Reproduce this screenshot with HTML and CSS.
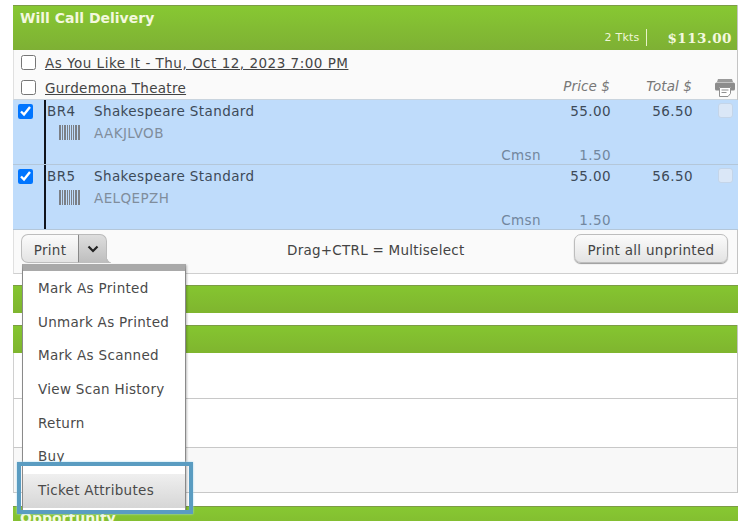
FILE: index.html
```html
<!DOCTYPE html>
<html lang="en">
<head>
<meta charset="utf-8">
<title>Will Call Delivery</title>
<link rel="stylesheet" href="styles.css">
</head>
<body>
<main class="page">
  <section class="panel">
    <header class="bar bar-main">
      <h2 class="bar-title">Will Call Delivery</h2>
      <div class="bar-summary">
        <span class="tkts">2 Tkts</span>
        <span class="amount">$113.00</span>
      </div>
    </header>
    <div class="order-head">
      <label class="head-line head-line-top"><input type="checkbox" class="check"><a href="#">As You Like It - Thu, Oct 12, 2023 7:00 PM</a></label>
      <div class="head-line head-line-cols">
        <label class="venue"><input type="checkbox" class="check"><a href="#">Gurdemona Theatre</a></label>
        <span class="col-price">Price $</span>
        <span class="col-total">Total $</span>
        <svg class="printer" viewBox="0 0 20 18" aria-hidden="true">
          <path fill="#9a9a9a" d="M3 0h14l1 3H2z"/>
          <path fill="#8c8c8c" d="M1.500 3.500h17a1.500 1.500 0 0 1 1.500 1.500v5a1.500 1.500 0 0 1-1.500 1.500H16V8H4v3.500H1.500A1.500 1.500 0 0 1 0 10V5a1.500 1.500 0 0 1 1.500-1.500z"/>
          <path fill="#fff" stroke="#909090" d="M4.500 8.500h11v6l-2.500 3h-8.500z"/>
          <path stroke="#909090" d="M6.500 11h7M6.500 13.500h5"/>
        </svg>
      </div>
    </div>

    <div class="ticket">
      <div class="tick-cell"><input type="checkbox" class="check" checked></div>
      <div class="tick-body">
        <div class="t-line">
          <span class="seat">BR4</span><span class="name">Shakespeare Standard</span>
          <span class="num price">55.00</span><span class="num total">56.50</span>
          <input type="checkbox" class="faint">
        </div>
        <div class="t-line t-code">
          <span class="seat"><svg class="barcode" viewBox="0 0 21 15" aria-hidden="true"><path fill="#7b7f85" d="M0 0h2v15H0zM3 0h1v15H3zM5 0h2v15H5zM8 0h1v15H8zM10 0h1v15h-1zM12 0h1v15h-1zM14 0h1v15h-1zM16 0h2v15h-2zM19 0h2v15h-2z"/></svg></span><span class="code">AAKJLVOB</span>
        </div>
        <div class="t-line t-fee"><span class="cmsn">Cmsn</span><span class="num price">1.50</span></div>
      </div>
    </div>

    <div class="ticket">
      <div class="tick-cell"><input type="checkbox" class="check" checked></div>
      <div class="tick-body">
        <div class="t-line">
          <span class="seat">BR5</span><span class="name">Shakespeare Standard</span>
          <span class="num price">55.00</span><span class="num total">56.50</span>
          <input type="checkbox" class="faint">
        </div>
        <div class="t-line t-code">
          <span class="seat"><svg class="barcode" viewBox="0 0 21 15" aria-hidden="true"><path fill="#7b7f85" d="M0 0h2v15H0zM3 0h1v15H3zM5 0h2v15H5zM8 0h1v15H8zM10 0h1v15h-1zM12 0h1v15h-1zM14 0h1v15h-1zM16 0h2v15h-2zM19 0h2v15h-2z"/></svg></span><span class="code">AELQEPZH</span>
        </div>
        <div class="t-line t-fee"><span class="cmsn">Cmsn</span><span class="num price">1.50</span></div>
      </div>
    </div>

    <footer class="actions">
      <div class="split">
        <button class="btn split-main" type="button">Print</button>
        <button class="split-arrow" type="button" aria-label="More">
          <svg viewBox="0 0 12 8" aria-hidden="true"><path d="M1.500 1.500 6 6l4.500-4.500" fill="none" stroke="#222" stroke-width="2.200"/></svg>
        </button>
      </div>
      <span class="hint">Drag+CTRL = Multiselect</span>
      <button class="btn print-all" type="button">Print all unprinted</button>
      <nav class="menu">
        <a href="#">Mark As Printed</a>
        <a href="#">Unmark As Printed</a>
        <a href="#">Mark As Scanned</a>
        <a href="#">View Scan History</a>
        <a href="#">Return</a>
        <a href="#">Buy</a>
        <a href="#" class="hover">Ticket Attributes</a>
      </nav>
      <div class="callout"></div>
    </footer>
  </section>

  <section class="bar bar-plain gap-a"></section>

  <section class="panel gap-b">
    <div class="bar bar-plain"></div>
    <div class="empty-row r1"></div>
    <div class="empty-row r2"></div>
    <div class="empty-row r3"></div>
  </section>

  <section class="bar bar-last"><h2 class="bar-title">Opportunity</h2></section>
</main>
</body>
</html>
```

FILE: styles.css
```css
* { box-sizing: border-box; }
html, body { margin: 0; height: 521px; overflow: hidden; background: #fff; }
body { font-family: "DejaVu Sans", sans-serif; font-size: 13.5px; letter-spacing: .3px; color: #444; }
.page { width: 725px; margin-left: 13px; padding-top: 5px; }

.bar { background: linear-gradient(#87c832, #7eb034); border-top: 1px solid #7c9c45; }
.bar-main { height: 45px; padding: 4px 5px 0 7px; display: flex; justify-content: space-between; }
.bar-title { margin: 0; font-size: 14px; font-weight: 700; line-height: 16px; letter-spacing: 0; color: #f3f8de; }
.bar-summary { align-self: flex-end; display: flex; align-items: center; height: 17px; margin-bottom: 4px; }
.tkts { font-size: 11px; letter-spacing: .2px; color: #f0f6d8; padding-right: 7px; border-right: 1px solid #e8f2c8; line-height: 17px; }
.amount { font-family: "DejaVu Serif", serif; font-size: 13.500px; font-weight: 700; letter-spacing: .5px; color: #f3f8de; margin-left: 20px; }
.bar-plain { height: 28px; background: linear-gradient(#85c530, #7fb52f); }

.panel { border-right: 1px solid #c4c4c4; }

.order-head { background: #fafafa; border-left: 1px solid #e0e0e0; height: 50px; border-bottom: 1px solid #c9d4de; }
.head-line { display: flex; align-items: center; height: 25px; padding-left: 7px; letter-spacing: .5px; }
.head-line-top { height: 25px; }
.head-line a, .venue a { color: #444; text-decoration: underline; }
.head-line .check, .venue .check { margin: 0 9px 0 0; width: 15px; height: 15px; }
.head-line-cols { position: relative; letter-spacing: .3px; }
.venue { display: flex; align-items: center; }
.col-price, .col-total { position: absolute; font-style: italic; color: #777; top: 3px; letter-spacing: .1px; }
.col-price { right: 127px; }
.col-total { right: 45px; }
.printer { position: absolute; right: 2px; top: 4px; width: 20px; height: 18px; }

.ticket { background: #bfdcfb; height: 65px; display: flex; border-bottom: 1px solid #b4c7d9; margin-right: -1px; letter-spacing: .4px; }
.tick-cell { width: 31px; padding: 4px 0 0 5px; flex: none; }
.tick-cell .check { margin: 0; width: 15px; height: 15px; }
.tick-body { flex: 1; border-left: 2px solid #10131c; padding-left: 1px; }
.t-line { display: flex; height: 22px; line-height: 22px; position: relative; color: #3d4a58; }
.seat { width: 47px; flex: none; }
.t-code { height: 22px; }
.barcode { display: block; width: 21px; height: 15px; margin: 3px 0 0 12px; }
.code { color: #808d9c; }
.num { position: absolute; text-align: right; }
.price { right: 127px; }
.total { right: 45px; }
.faint { appearance: none; position: absolute; right: 5px; top: 3px; margin: 0; width: 15px; height: 15px; background: #dae7f7; border: 1px solid #c4d5e9; border-radius: 3px; }
.t-fee { color: #72879e; height: 21px; }
.cmsn { position: absolute; right: 197px; }

.actions { position: relative; z-index: 2; height: 44px; background: #fafafa; border-left: 1px solid #e0e0e0; border-bottom: 1px solid #cfcfcf; display: flex; align-items: center; padding: 0 9px 6px 7px; justify-content: space-between; }
.btn { font: inherit; letter-spacing: inherit; color: #444; height: 29px; border: 1px solid #bdbdbd; background: linear-gradient(#fbfbfb, #e3e3e3); border-radius: 7px; box-shadow: 0 1px 1px #999; padding: 2px 0 0; }
.split { display: flex; height: 29px; width: 86px; }
.split-main { width: 58px; border-radius: 7px 0 0 7px; border-right-color: #888; box-shadow: none; }
.split-arrow { position: relative; width: 28px; height: 29px; padding: 0; border: 1px solid #bbb; border-left: 0; border-bottom: 0; border-radius: 0 7px 0 0; background: linear-gradient(#dedede, #bdbdbd); }
.split-arrow::after { content: ""; position: absolute; left: 100%; bottom: 0; width: 8px; height: 7px; background: radial-gradient(circle at 100% 0, transparent 7px, #bdbdbd 7.500px); }
.split-arrow svg { display: block; width: 12px; height: 8px; margin: 0 auto; }
.hint { position: absolute; left: 273px; top: 10px; line-height: 20px; letter-spacing: .25px; }
.print-all { width: 154px; }

.menu { position: absolute; left: 8px; top: 34px; width: 164px; height: 247px; background: #fff; border: 1px solid #8a8a8a; border-top: 7px solid #a9a9a9; box-shadow: 1px 1px 2px rgba(0,0,0,.25); padding-top: 1px; display: flex; flex-direction: column; }
.menu a { display: block; height: 33.7px; line-height: 33.700px; padding-left: 15px; color: #4a4a4a; text-decoration: none; flex: none; }
.menu .hover { background: linear-gradient(#efefef, #d6d6d6); }
.callout { position: absolute; left: 3px; top: 232px; width: 176px; height: 52px; border: 4px solid #5a9cc1; box-shadow: 0 0 2px #a8d8ee; }

.gap-a { margin-top: 11px; }
.gap-b { margin-top: 12px; }
.empty-row { border-left: 1px solid #d0d0d0; border-bottom: 1px solid #c8c8c8; background: #fff; }
.r1 { height: 46px; }
.r2 { height: 49px; }
.r3 { height: 45px; background: #f8f8f8; }
.bar-last { margin-top: 13px; height: 30px; padding: 3px 0 0 7px; background: linear-gradient(#87c832, #7fb52f); }
```
